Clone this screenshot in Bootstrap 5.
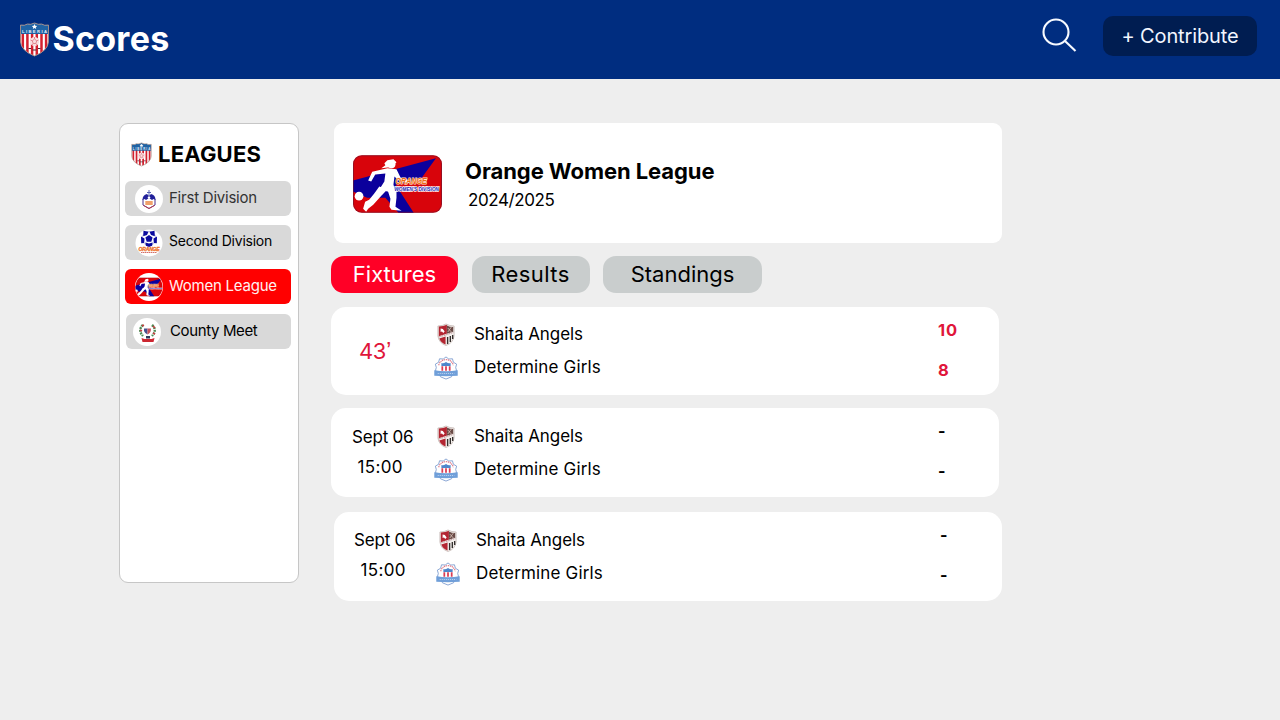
<!DOCTYPE html>
<html lang="en">
<head>
<meta charset="utf-8">
<meta name="viewport" content="width=device-width, initial-scale=1">
<title>Scores</title>
<link href="https://cdn.jsdelivr.net/npm/bootstrap@5.3.0/dist/css/bootstrap.min.css" rel="stylesheet">
<style>
body{background:#eee;font-family:Inter,"Liberation Sans",sans-serif;color:#000;min-height:720px;overflow:hidden}
svg{display:block;flex:none}
span{white-space:nowrap}
.topbar{background:#002d80;height:79px;padding:0 23px 0 19px}
.brand-name{font-size:34px;line-height:40px;font-weight:700;color:#fff;letter-spacing:.25px;margin:0 0 1px 2.500px}
.search-icon{margin:-8px 26px 0 0}
.btn-contribute,.btn-contribute:hover{background:#001d51;color:#f2f6ff;width:154px;height:40px;border:0;border-radius:10px;font-size:20px;line-height:40px;padding:0;margin-bottom:7px;letter-spacing:-.13px}
.layout{padding:44px 0 0 119px;gap:32px}
.leagues{width:180px;height:460px;border:1px solid #c6c6c6;border-radius:9px;padding:16px 5px 0}
.leagues-title{padding-left:5.500px;gap:6.500px;margin-bottom:13px}
.leagues h1{font-size:22px;line-height:28px;font-weight:700;margin:0;letter-spacing:.2px}
.league{height:35px;width:166px;background:#d9d9d9;border-radius:6px;color:#000;padding-left:10px;text-decoration:none;gap:6px;font-size:15px;letter-spacing:-.23px}
.league.current{background:#f00;color:#fff0f0}
.league.muted{color:#333}
.league.small-label{font-size:14px}
.league.county{width:165px;margin:1px 0 0 1px;padding-left:7px;gap:9px;letter-spacing:-.37px}
.content{width:671px}
.shifted{margin-left:3px}
.league-head{height:120px;width:668px;border-radius:9px;padding:2px 0 0 19px}
.league-head h2{font-size:22px;line-height:28px;font-weight:700;margin:0;padding-top:4px;letter-spacing:-.07px}
.season{font-size:17px;line-height:30px;margin-left:3px;letter-spacing:-.42px}
.tabs{gap:13.5px;margin-top:13px}
.tab{height:37px;line-height:37px;border-radius:13px;background:#c9cdcd;border:0;padding:0;font-size:22px;color:#000;text-align:center}
.tab.current{background:#ff0026;color:#fff}
.results{letter-spacing:.42px}
.fixture{display:grid;grid-template-columns:103px 40px 1fr 61px;width:668px;height:89px;border-radius:15px}
.fixture.in-play{height:88px}
.crests{padding-top:17px}
.in-play .crests{padding-top:16px}
.crests svg+svg{margin-top:9px}
.crests svg:first-child{margin-left:3px}
.teams{padding-top:12px}
.in-play .teams{padding-top:11px}
.team-line{height:33px;line-height:33px;font-size:17px}
.team-a{letter-spacing:-.06px}
.team-b{letter-spacing:.17px}
.scores{padding-top:3px}
.score-line{height:40px;line-height:40px;font-size:16px;font-weight:700}
.in-play .scores{padding-top:3px;color:#e0163a}
.in-play .score-line{font-size:16.500px;letter-spacing:.9px}
.minute{font-size:22px;line-height:89px;color:#e0163a;padding-left:28px;letter-spacing:-.4px}
.tick{font-family:"Liberation Sans",sans-serif;font-size:24px;line-height:1}
.when{font-size:17px;line-height:30px;padding:14px 0 0 21px}
.when span{display:block;letter-spacing:-.2px}
.when span+span{margin-left:5.500px;letter-spacing:.35px}
.shifted .when{padding:13px 0 0 20px}
.shifted .when span+span{margin-left:6.500px}
.shifted .crests,.shifted .teams,.shifted .scores{margin-left:-1px}
</style>
</head>
<body>
<svg width="0" height="0" style="position:absolute">
<defs>
<clipPath id="shieldClip"><path d="M1 3Q5 4 8 2Q11 3 15 1Q19 3 22 2Q25 4 29 3V20Q28 29 15 34Q2 29 1 20Z"/></clipPath>
<clipPath id="round"><circle cx="14" cy="14" r="13.5"/></clipPath>
</defs>
<symbol id="shield" viewBox="0 0 30 35">
<g clip-path="url(#shieldClip)"><path fill="#fff" d="M0 0h30v35H0z"/><path stroke="#d3202f" stroke-width="2.500" d="M3.300 11v24M7.900 11v24M12.600 11v24M17.300 11v24M22 11v24M26.600 11v24"/><path fill="#1f63a5" d="M0 0h30v12H0z"/><path fill="#fff" d="m15 2 .8 1.700 1.900.2-1.400 1.300.4 1.800-1.700-.9-1.700.9.4-1.800-1.400-1.300 1.900-.2z"/><text x="2.500" y="11" font-family="Liberation Sans" font-size="4.200" font-weight="700" textLength="25" fill="#e4eef8">LIBERIA</text><circle cx="15" cy="19.500" r="4.600" fill="#f8dfe0"/><path fill="none" stroke="#e0808a" stroke-width=".9" d="m15 17 2.200 1.800-.9 2.700h-2.600l-.9-2.700zM15 15v2M11 18l2 1M19 18l-2 1M12.500 23l1-1.500M17.500 23l-1-1.500"/><path stroke="#4b2933" d="M9 26.500h2.500M13 28h4M18.500 26.500h2.500"/></g>
<path fill="none" stroke="#a98f86" stroke-width=".9" d="M1 3Q5 4 8 2Q11 3 15 1Q19 3 22 2Q25 4 29 3V20Q28 29 15 34Q2 29 1 20Z"/>
</symbol>
<symbol id="women" viewBox="0 0 88 57">
<path fill="#d8040b" d="M0 0h88v57H0z"/>
<path fill="#0b009c" d="M0 25 82 3 66 25 42 29 60 57H45L32 42 14 42 0 36z"/>
<circle cx="38" cy="9" r="4" fill="#fff"/>
<path fill="#fff" d="m40 4-6 1-3 3 1 2-4 3 8-1 4-2 3-3zM34 13l9 1 4 8 9 3-1 2.500-10-2.500-4-4-1 8 2 8-8-1-8-2 5-8 1-8-10 1-4 7-3-1 4-8.500z"/>
<path fill="#fff" d="m26 31-5 7-5 6-4 2-2 7 3 3 2-3 5-4 8-9 6-6zM34 34l3 9-1 8 2 3 10 1-6-4 1-9v-8z"/>
<circle cx="6" cy="40.500" r="4.300" fill="#fff"/>
<text x="42" y="28.500" font-family="Liberation Sans" font-size="8.500" font-weight="700" font-style="italic" textLength="31" lengthAdjust="spacingAndGlyphs" fill="#ef6a12" stroke="#ffe6d0" stroke-width="1.200" paint-order="stroke">ORANGE</text>
<text x="41" y="35" font-family="Liberation Sans" font-size="5.300" font-weight="700" font-style="italic" textLength="44" lengthAdjust="spacingAndGlyphs" fill="#1a1bb0" stroke="#fff" stroke-width="1.500" paint-order="stroke">WOMEN'S DIVISION</text>
<rect x=".5" y=".5" width="87" height="56" rx="8" fill="none" stroke="#6b1730" stroke-opacity=".6"/>
</symbol>
<symbol id="first" viewBox="0 0 28 28"><circle cx="14" cy="14" r="14" fill="#fff"/><path fill="#fff" stroke="#4b2f8d" d="M8 14v6l6 3.500 6-3.500v-6"/><path fill="#21209a" d="M7.500 15q0-5 4.500-6l2 2 2-2q4.500 1 4.500 6l-2-1-1.500 1-3-2-3 2-1.500-1z"/><path stroke="#5965b5" d="M14 5v6M12 7.500h4"/><path fill="#f0a06b" d="M10.300 16h7.400v4h-7.400z"/><path fill="none" stroke="#c13b48" stroke-width=".9" d="M8.500 20.500 14 23.500l5.500-3"/><path fill="#fff" d="m14 11 1.500 1.500L14 14l-1.500-1.500z"/></symbol>
<symbol id="second" viewBox="0 0 28 28"><circle cx="14" cy="14" r="13.500" fill="#fff"/><path fill="#fff" stroke="#9b9ed7" stroke-width=".6" d="M14 2.500a7 7 0 1 1 0 14 7 7 0 0 1 0-14z"/><path fill="#0b0b9e" d="m14 6 3.600 2.600-1.300 4.100h-4.600l-1.300-4.100zM8.500 1.800l5 1-1.500 3.300-3.800 1.200zM19.500 1.800l-5 1 1.500 3.300 3.800 1.200zM6 7.500l3.500 2-.3 4.400-3 .3zM22 7.500l-3.500 2 .3 4.400 3 .3zM10.300 13.500l3.700 1 3.700-1-.6 3.200-3.100 1.200-3.100-1.200z"/><text x="3.500" y="22.300" font-family="Liberation Sans" font-size="5.600" font-weight="700" font-style="italic" textLength="21" lengthAdjust="spacingAndGlyphs" fill="#ed7127" stroke="#ed7127" stroke-width=".3">ORANGE</text><path stroke="#c94a43" stroke-width=".8" stroke-dasharray="1.500 .5" d="M6 23.500h16"/></symbol>
<symbol id="womenRound" viewBox="0 0 28 28"><circle cx="14" cy="14" r="14" fill="#fff"/><g clip-path="url(#round)"><use href="#women" x="-1" y="4.500" width="30" height="19"/></g></symbol>
<symbol id="county" viewBox="0 0 28 28"><circle cx="14" cy="14" r="14" fill="#fff"/><path fill="none" stroke="#4d8b55" stroke-width="2.400" stroke-dasharray="2 .8" d="M10 7q-5.500 5 0 11M19 7q5.500 5 0 11"/><path stroke="#c83b3e" stroke-width="1.500" d="m9 8 2-1M20 8l2 2M7 12l2 1M20 15l2 1"/><path fill="#48518d" d="M11 10.500h3.500v6q-2.500-1-3.500-3.500z"/><path fill="#c8525b" d="M14.500 10.500H18q0 4.500-3.500 6z"/><path fill="#303858" d="M13 18h4v2.500h-4z"/><path fill="#cc2731" d="m8.500 20 3 1h7l3-1-1 4h-11z"/></symbol>
<symbol id="shaita" viewBox="0 0 20 23"><path fill="#f3efec" stroke="#b9aaa6" stroke-width=".7" d="M1 3q5 0 9-2 4 2 9 2v10q-1 7-9 9.500Q2 20 1 13z"/><path fill="#b32632" d="M2 3.500q5 0 9-1.800V12L2 14z"/><path fill="#6a4a46" d="M11 2.500Q14 4 18 4v5l-7 3z"/><path fill="#fff" d="m4 5.500 2.500.5 2 2.500-1.500 1.500-1.500-1.500-1.500.5z"/><path stroke="#ddc9c0" stroke-width=".8" d="m12 5 4 4M16 4l-4 5"/><path fill="#b32632" d="m2.500 15.500 7-2v8q-5-1.500-7-6z"/><path stroke="#34302e" stroke-width="1.500" d="M11.800 14v7M14.800 13v6M17.400 12v4"/><path stroke="#f5eded" stroke-width="1.300" d="m2 14 16-4.500"/><path stroke="#9a6461" stroke-width=".8" stroke-dasharray="1 1" d="m2 14 16-4.500"/></symbol>
<symbol id="determine" viewBox="0 0 26 26"><path fill="#fff" stroke="#7496cc" stroke-width=".9" d="m13 1 3 2.300 4-.3 1 3.800 3.500 2-1 3.700 1 3.500-3.500 1.500-2 5-6 2.500-6-2.500-2-5L1.500 16l1-3.500-1-3.700L5 6.800 6 3l4 .3z"/><path fill="none" stroke="#df7784" stroke-width="1.300" stroke-dasharray="1.400 .7" d="M5 10q2-6 8-6t8 6"/><path fill="#4e86cb" d="M8 7.500q2 1 5-1 3 2 5 1V11H8z"/><path fill="#fff" d="M8 11h10v5H8z"/><path stroke="#dc3b53" stroke-width="1.900" d="M9 11v5M13 11v5M17 11v5"/><path fill="#709fd9" d="M.3 15.500Q13 17.500 25.700 15.500v6Q13 22.500.3 21.500z"/><path stroke="#b9d2f0" stroke-width="1.200" stroke-dasharray="1.200 1" d="M4 19h18"/></symbol>
</svg>

<header class="topbar d-flex align-items-center">
  <a class="d-flex align-items-center text-decoration-none" href="#"><svg width="31" height="35"><use href="#shield"/></svg><span class="brand-name">Scores</span></a>
  <svg class="search-icon ms-auto" width="35" height="35" viewBox="0 0 35 35" fill="none" stroke="#f7faff" stroke-width="2.100"><circle cx="14" cy="14" r="12.500"/><path d="m23 23 10.500 10"/></svg>
  <button class="btn btn-contribute" type="button">+ Contribute</button>
</header>

<main class="layout d-flex">
  <aside class="leagues bg-white">
    <div class="leagues-title d-flex align-items-center"><svg width="21" height="25"><use href="#shield"/></svg><h1>LEAGUES</h1></div>
    <nav class="d-flex flex-column" style="gap:9px">
      <a href="#" class="league muted d-flex align-items-center"><svg width="28" height="28"><use href="#first"/></svg><span>First Division</span></a>
      <a href="#" class="league small-label d-flex align-items-center"><svg width="28" height="28"><use href="#second"/></svg><span class="mb-1">Second Division</span></a>
      <a href="#" class="league current d-flex align-items-center"><svg width="28" height="28"><use href="#womenRound"/></svg><span>Women League</span></a>
      <a href="#" class="league county d-flex align-items-center"><svg width="28" height="28"><use href="#county"/></svg><span>County Meet</span></a>
    </nav>
  </aside>

  <section class="content">
    <div class="league-head shifted bg-white d-flex align-items-center">
      <svg width="89" height="58" viewBox="0 0 89 58" style="border-radius:9px"><use href="#women" width="89" height="58"/></svg>
      <div style="margin-left:23px"><h2>Orange Women League</h2><div class="season">2024/2025</div></div>
    </div>
    <div class="tabs d-flex">
      <button class="tab current" type="button" style="width:127px">Fixtures</button>
      <button class="tab results" type="button" style="width:118px">Results</button>
      <button class="tab" type="button" style="width:159px">Standings</button>
    </div>
    <article class="fixture in-play bg-white" style="margin-top:14px">
      <div class="minute">43<span class="tick">’</span></div>
      <div class="crests"><svg width="18" height="23" viewBox="0 0 20 23" preserveAspectRatio="none"><use href="#shaita"/></svg><svg width="24" height="26"><use href="#determine"/></svg></div>
      <div class="teams"><div class="team-line team-a">Shaita Angels</div><div class="team-line team-b">Determine Girls</div></div>
      <div class="scores"><div class="score-line">10</div><div class="score-line">8</div></div>
    </article>
    <article class="fixture bg-white" style="margin-top:13px">
      <div class="when"><span>Sept 06</span><span>15:00</span></div>
      <div class="crests"><svg width="18" height="23" viewBox="0 0 20 23" preserveAspectRatio="none"><use href="#shaita"/></svg><svg width="24" height="26"><use href="#determine"/></svg></div>
      <div class="teams"><div class="team-line team-a">Shaita Angels</div><div class="team-line team-b">Determine Girls</div></div>
      <div class="scores"><div class="score-line">-</div><div class="score-line">-</div></div>
    </article>
    <article class="fixture shifted bg-white" style="margin-top:15px">
      <div class="when"><span>Sept 06</span><span>15:00</span></div>
      <div class="crests"><svg width="18" height="23" viewBox="0 0 20 23" preserveAspectRatio="none"><use href="#shaita"/></svg><svg width="24" height="26"><use href="#determine"/></svg></div>
      <div class="teams"><div class="team-line team-a">Shaita Angels</div><div class="team-line team-b">Determine Girls</div></div>
      <div class="scores"><div class="score-line">-</div><div class="score-line">-</div></div>
    </article>
  </section>
</main>
<script src="https://cdn.jsdelivr.net/npm/bootstrap@5.3.0/dist/js/bootstrap.bundle.min.js"></script>
</body>
</html>
